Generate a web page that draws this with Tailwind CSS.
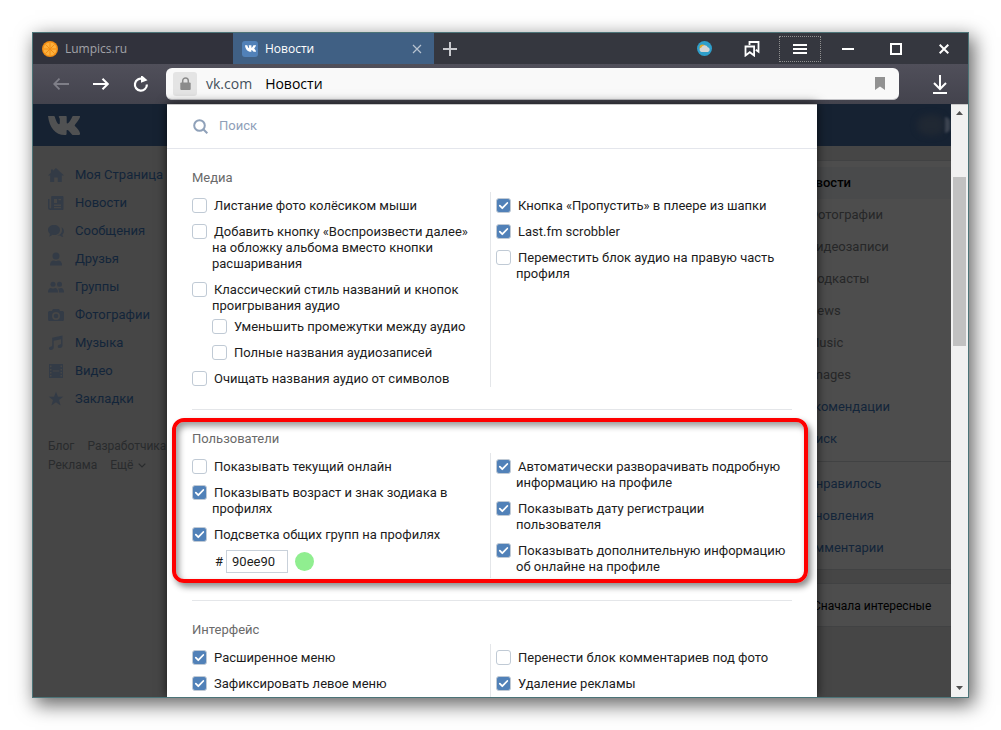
<!DOCTYPE html>
<html lang="ru">
<head>
<meta charset="utf-8">
<title>Новости</title>
<script src="https://cdn.jsdelivr.net/npm/@tailwindcss/browser@4"></script>
</head>
<body class="bg-white font-['Roboto','Liberation_Sans',sans-serif] text-[13px] leading-4 text-[#1c1c1c]">
<svg class="hidden" aria-hidden="true">
  <symbol id="tick" viewBox="0 0 15 15"><path d="M3.8 7.6l2.5 2.6 5-5.2" fill="none" stroke="#fff" stroke-width="1.8" stroke-linecap="round" stroke-linejoin="round"/></symbol>
  <symbol id="vk" viewBox="0 0 32 19"><path d="M0 0h5.600c.8 0 1.100.4 1.300 1.100C8 5.200 9.800 8.300 11 8.300c.6 0 .8-.5.8-1.700V3.400c0-1.300-.7-1.900-1-2.400-.3-.6.2-1 .9-1h5.900c.9 0 1.100.4 1.100 1.200v5.300c0 .7.2 1 .6 1 1.200 0 3.500-3.400 4.800-6.500.3-.7.7-1 1.500-1h5.600c.9 0 1 .4.7 1.300-1 3-5.200 7.500-5.200 8.300 0 .8 4.500 4 5.300 7.700.2.900-.2 1.700-1.200 1.700h-5.500c-1 0-1.400-.5-2-1.300-1.300-1.600-3-3.700-4-3.700-.6 0-.7.4-.7 1.300v2.100c0 1.200-.4 1.600-1.800 1.600C7.200 19 1.300 11.500 0 0z" fill="currentColor"/></symbol>
</svg>
<div class="flex h-screen p-8">
<div class="flex min-w-0 flex-1 flex-col overflow-hidden border border-[#4c7478] bg-[#464646] shadow-[4px_6px_18px_1px_rgba(0,0,0,0.6)]">

  <!-- Tabs and window buttons -->
  <header class="flex h-[31px] shrink-0 items-center bg-[#35373f] font-['Open_Sans','Noto_Sans',sans-serif] text-xs">
    <a href="#" class="flex h-full w-[200px] items-center bg-[#31323c] pl-[9px] text-[#a2a3a8]">
      <svg class="mr-[7px] size-4" viewBox="0 0 16 16"><circle cx="8" cy="8" r="8" fill="#f28c13"/><circle cx="8" cy="8" r="6.600" fill="#fdb03c"/><path d="M8 1.500v13M1.500 8h13M3.400 3.400l9.200 9.200M12.600 3.400l-9.200 9.200" stroke="#f28c13" stroke-width="1"/></svg>
      Lumpics.ru
    </a>
    <div class="flex h-full w-[201px] items-center bg-[#406084] pr-3 pl-[9px] text-white">
      <span class="mr-[7px] flex size-4 items-center justify-center rounded-[3px] bg-[#5181b8]"><svg class="h-[7px] w-[11px] text-white"><use href="#vk"/></svg></span>
      <a href="#" class="flex-1">Новости</a>
      <button aria-label="Закрыть вкладку"><svg class="size-[10px]" viewBox="0 0 10 10"><path d="M1 1l8 8M9 1l-8 8" stroke="#b7c3d0" stroke-width="1.200"/></svg></button>
    </div>
    <button aria-label="Новая вкладка" class="flex h-full w-8 items-center justify-center"><svg class="size-[14px]" viewBox="0 0 14 14"><path d="M7 0v14M0 7h14" stroke="#c9cace" stroke-width="2"/></svg></button>
    <div class="flex-1"></div>
    <button aria-label="Погода" class="flex w-12 justify-center"><svg class="size-[15px]" viewBox="0 0 15 15"><circle cx="7.500" cy="7.500" r="7.500" fill="#2f9fcb"/><circle cx="5.500" cy="6.500" r="3" fill="#e0a92c"/><path d="M4.500 11a2.300 2.300 0 0 1-.2-4.500 3.500 3.500 0 0 1 6.500-.3A2.500 2.500 0 0 1 11 11z" fill="#d5d5d5"/></svg></button>
    <button aria-label="Закладки" class="flex w-12 justify-center"><svg class="size-4" viewBox="0 0 16 16" fill="none" stroke="#fff" stroke-width="1.800"><path d="M1.500 5.500h8.600v9l-4.300-3.300-4.300 3.300z"/><path d="M5.500 4V1h9v9.800l-2.700-2"/></svg></button>
    <button aria-label="Меню" class="mx-[3px] flex h-[26px] w-[42px] items-center justify-center border border-dotted border-[#909090]"><svg class="h-[10px] w-[14px]" viewBox="0 0 14 10"><path d="M0 1h14M0 5h14M0 9h14" stroke="#fff" stroke-width="2"/></svg></button>
    <button aria-label="Свернуть" class="flex w-12 justify-center"><svg class="h-[2px] w-3" viewBox="0 0 12 2"><path d="M0 1h12" stroke="#fff" stroke-width="2"/></svg></button>
    <button aria-label="Развернуть" class="flex w-12 justify-center"><svg class="size-3" viewBox="0 0 12 12"><path d="M1 1h10v10H1z" fill="none" stroke="#fff" stroke-width="2"/></svg></button>
    <button aria-label="Закрыть" class="flex w-12 justify-center"><svg class="size-[10px]" viewBox="0 0 10 10"><path d="M.7.7l8.600 8.600M9.300.7L.7 9.300" stroke="#fff" stroke-width="2"/></svg></button>
  </header>

  <!-- Address bar -->
  <div class="flex h-10 shrink-0 items-center bg-linear-to-b from-[#504f5a] to-[#43434d] pl-2 font-['Open_Sans','Noto_Sans',sans-serif]">
    <button aria-label="Назад" class="flex w-10 justify-center"><svg class="h-3 w-4" viewBox="0 0 16 12" fill="none" stroke="#7f7f88" stroke-width="1.800"><path d="M16 6H1.500M6.500.7L1.200 6l5.300 5.300"/></svg></button>
    <button aria-label="Вперёд" class="flex w-10 justify-center"><svg class="h-3 w-4" viewBox="0 0 16 12" fill="none" stroke="#fff" stroke-width="2"><path d="M0 6h14.500M9.500.7L14.800 6l-5.300 5.300"/></svg></button>
    <button aria-label="Обновить" class="flex w-10 justify-center"><svg class="size-4" viewBox="0 0 16 16"><path d="M13.900 8.500a6 6 0 1 1-4.200-5.600" fill="none" stroke="#fff" stroke-width="2.200"/><path d="M8 0h1.500l5 4.200L8 6.800z" fill="#fff"/></svg></button>
    <div class="ml-[5px] flex h-8 flex-1 items-center rounded-md border-b border-[#c4c4c8] bg-[#f9f9f9] pr-[14px] pl-[7px] text-sm">
      <span class="mr-[9px] flex size-6 items-center justify-center rounded-[3px] bg-[#e4e4e4]"><svg class="h-[13px] w-[11px]" viewBox="0 0 11 13"><path d="M2.700 6V3.700a2.800 2.800 0 0 1 5.600 0V6" fill="none" stroke="#8b8b8b" stroke-width="1.500"/><rect y="5.500" x=".3" width="10.400" height="7.500" rx="1" fill="#8b8b8b"/></svg></span>
      <span class="mr-[13px] text-[#44505c]">vk.com</span>
      <span class="flex-1 text-black">Новости</span>
      <button aria-label="Добавить в закладки"><svg class="h-[13px] w-[10px]" viewBox="0 0 10 13"><path d="M0 0h10v13L5 9.500 0 13z" fill="#929292"/></svg></button>
    </div>
    <button aria-label="Загрузки" class="mr-3 ml-[25px] flex w-8 justify-center"><svg class="h-[19px] w-[14px]" viewBox="0 0 14 19" fill="none" stroke="#fff" stroke-width="2"><path d="M7 0v13.500M1 8l6 6 6-6M0 18h14"/></svg></button>
  </div>

  <div class="flex min-h-0 flex-1">
    <!-- Dimmed left menu -->
    <aside class="min-w-0 flex-1 overflow-hidden">
      <div class="flex h-[42px] items-center bg-[#162232] pl-[15px] text-[#505152]"><svg class="h-[19px] w-8"><use href="#vk"/></svg></div>
      <nav class="mt-[15px] flex flex-col pl-[15px] whitespace-nowrap text-[#13253a] [&_svg]:size-4 [&_svg]:shrink-0 [&_svg]:fill-[#333b46]">
        <a href="#" class="flex h-7 items-center gap-[11px]"><svg viewBox="0 0 16 16"><path d="M8 1l8 7.500h-2.200V15H9.800v-4.500H6.200V15H2.200V8.500H0L3 5.700V2.500h2v1.300z"/></svg>Моя Страница</a>
        <a href="#" class="flex h-7 items-center gap-[11px]"><svg viewBox="0 0 16 16"><path fill-rule="evenodd" d="M4 1h10.500q1 0 1 1v12q0 1-1 1H2.500Q0 15 0 12.500V4h1.500v8.500q0 1 .8 1 .9 0 .9-1V2q0-1 .8-1zM6 4v4h3V4zM6 9.500V11h7V9.500zM6 12v1.300h7V12zM10.500 4v1.300H13V4z"/></svg>Новости</a>
        <a href="#" class="flex h-7 items-center gap-[11px]"><svg viewBox="0 0 16 16"><path d="M6 2c3.500 0 6 2 6 5s-2.500 5-6 5l-1.600-.2Q3 13.500 1 13.500q1-1.500.8-2.800Q0 9.300 0 7c0-3 2.500-5 6-5zM13.500 4.200c3 1.800 3.200 5.400.9 7.300q0 1.500 1 2.500-2 0-3.200-1.500l-2.700.1c4-1 5.500-4.500 4-8.400z"/></svg>Сообщения</a>
        <a href="#" class="flex h-7 items-center gap-[11px]"><svg viewBox="0 0 16 16"><circle cx="8" cy="5" r="3.500"/><path d="M2 14.500q0-5 4-5 2 1 4 0 4 0 4 5z"/></svg>Друзья</a>
        <a href="#" class="flex h-7 items-center gap-[11px]"><svg viewBox="0 0 16 16"><circle cx="5" cy="5.300" r="2.500"/><circle cx="11.500" cy="5.300" r="2.500"/><path d="M0 13.500q0-4.500 3-4.500 2 1 4 0 3 0 3 4.500zM11 13.500q0-3-1-4.300 1.500.5 3-.2 3 0 3 4.500z"/></svg>Группы</a>
        <a href="#" class="flex h-7 items-center gap-[11px]"><svg viewBox="0 0 16 16"><path fill-rule="evenodd" d="M5 2h6l1 2h2.500Q16 4 16 5.500v7q0 1.500-1.500 1.500h-13Q0 14 0 12.500v-7Q0 4 1.500 4H4zM8 5a4 4 0 1 0 0 8 4 4 0 0 0 0-8zm0 1.700a2.300 2.300 0 1 1 0 4.600 2.300 2.300 0 0 1 0-4.600z"/></svg>Фотографии</a>
        <a href="#" class="flex h-7 items-center gap-[11px]"><svg viewBox="0 0 16 16"><path d="M4.200 2.800L14.500.5v10c0 1.300-1 2.500-2.700 2.500-1.300 0-2-.7-2-1.600 0-2 3.300-1.500 3.300-2.800V4.200l-7.400 1.600v6.700c0 1.400-1.200 2.500-2.800 2.500-1.200 0-1.900-.7-1.900-1.500 0-2 3.200-1.500 3.200-2.900z"/></svg>Музыка</a>
        <a href="#" class="flex h-7 items-center gap-[11px]"><svg viewBox="0 0 16 16"><path fill-rule="evenodd" d="M1 1h14v14H1zM2 2.500v1.700h1.500V2.500zM2 6v1.500h1.500V6zM2 9v1.500h1.500V9zM2 12v1.500h1.500V12zM12.500 2.500v1.700H14V2.500zM12.500 6v1.500H14V6zM12.500 9v1.500H14V9zM12.500 12v1.500H14V12zM4.800 7.500v1h6.400v-1z"/></svg>Видео</a>
        <a href="#" class="flex h-7 items-center gap-[11px]"><svg viewBox="0 0 16 16"><path d="M8 .8l2 5h5.200l-4.200 3.300 1.600 5.300L8 11.200l-4.600 3.200L5 9.100.8 5.800H6z"/></svg>Закладки</a>
      </nav>
      <div class="mt-[25px] flex flex-col gap-[3px] pl-[15px] text-xs leading-4 whitespace-nowrap text-[#292b2d]">
        <div class="flex gap-[13px]"><a href="#">Блог</a><a href="#">Разработчикам</a></div>
        <div class="flex gap-[13px]"><a href="#">Реклама</a><a href="#" class="flex items-center gap-[5px]">Ещё <svg class="h-[5px] w-2" viewBox="0 0 8 5"><path d="M.7.7L4 4 7.300.7" fill="none" stroke="#292b2d" stroke-width="1.200"/></svg></a></div>
      </div>
    </aside>

    <!-- Settings panel -->
    <main class="relative z-10 w-[650px] shrink-0 overflow-hidden border-t border-[#c8c8c8] bg-white shadow-[0_0_10px_rgba(0,0,0,0.7)]">
      <div class="flex h-11 items-center border-b border-[#e4e6ec] pb-px pl-[26px]">
        <svg class="mr-[11px] size-[15px]" viewBox="0 0 15 15" fill="none" stroke="#8fa1b9" stroke-width="2"><circle cx="6.500" cy="6.500" r="5.300"/><path d="M10.300 10.300l4 4"/></svg>
        <input type="text" aria-label="Поиск" placeholder="Поиск" class="flex-1 outline-none placeholder:text-[#8fa0b8]">
      </div>
      <div class="px-[25px] [&_input[type=checkbox]]:col-start-1 [&_input[type=checkbox]]:row-start-1 [&_input[type=checkbox]]:size-[15px] [&_input[type=checkbox]]:appearance-none [&_input[type=checkbox]]:rounded-[3px] [&_input[type=checkbox]]:border [&_input[type=checkbox]]:border-[#c0cad5] [&_input:checked]:border-[#5181b8] [&_input:checked]:bg-[#5181b8] [&_label]:flex [&_label]:gap-[5px] [&_label>span:first-child]:grid [&_label>span:first-child]:size-[15px] [&_label>span:first-child]:shrink-0 [&_label>span:last-child]:indent-[2px] [&_svg]:pointer-events-none [&_svg]:z-10 [&_svg]:col-start-1 [&_svg]:row-start-1 [&_svg]:size-[15px] [&_h2]:mb-[6px] [&_h2]:text-[#6a6a6a]">

        <section class="pt-[21px] pb-[22px]">
          <h2>Медиа</h2>
          <div class="flex">
            <div class="flex w-[298px] flex-col gap-[10px] pt-[6px] pr-5">
              <label><span><input type="checkbox"></span><span>Листание фото колёсиком мыши</span></label>
              <label><span><input type="checkbox"></span><span>Добавить кнопку «Воспроизвести далее» на обложку альбома вместо кнопки расшаривания</span></label>
              <div class="flex flex-col gap-[5px]">
                <label><span><input type="checkbox"></span><span>Классический стиль названий и кнопок проигрывания аудио</span></label>
                <div class="flex flex-col gap-[10px] pl-5">
                  <label><span><input type="checkbox"></span><span>Уменьшить промежутки между аудио</span></label>
                  <label><span><input type="checkbox"></span><span>Полные названия аудиозаписей</span></label>
                </div>
              </div>
              <label><span><input type="checkbox"></span><span>Очищать названия аудио от символов</span></label>
            </div>
            <div class="flex flex-1 flex-col gap-[10px] border-l border-[#e4e6e9] pt-[6px] pl-[5px]">
              <label><span><input type="checkbox" checked><svg><use href="#tick"/></svg></span><span>Кнопка «Пропустить» в плеере из шапки</span></label>
              <label><span><input type="checkbox" checked><svg><use href="#tick"/></svg></span><span>Last.fm scrobbler</span></label>
              <label><span><input type="checkbox"></span><span>Переместить блок аудио на правую часть профиля</span></label>
            </div>
          </div>
        </section>

        <section class="relative border-t border-[#e4e6e9] pt-[21px] pb-[22px]">
          <h2>Пользователи</h2>
          <div class="flex">
            <div class="flex w-[298px] flex-col gap-[10px] pt-[6px] pr-5 pb-[5px]">
              <label><span><input type="checkbox"></span><span>Показывать текущий онлайн</span></label>
              <label><span><input type="checkbox" checked><svg><use href="#tick"/></svg></span><span>Показывать возраст и знак зодиака в профилях</span></label>
              <div class="flex flex-col gap-[7px]">
                <label><span><input type="checkbox" checked><svg><use href="#tick"/></svg></span><span>Подсветка общих групп на профилях</span></label>
                <div class="flex items-center pl-[23px]">#<input type="text" aria-label="Цвет подсветки" value="90ee90" class="ml-[3px] h-[23px] w-[62px] border border-[#c9d1da] px-[5px] outline-none"><span class="ml-[7px] size-[19px] rounded-full bg-[#90ee90]"></span></div>
              </div>
            </div>
            <div class="flex flex-1 flex-col gap-[10px] border-l border-[#e4e6e9] pt-[6px] pl-[5px]">
              <label><span><input type="checkbox" checked><svg><use href="#tick"/></svg></span><span>Автоматически разворачивать подробную информацию на профиле</span></label>
              <label><span><input type="checkbox" checked><svg><use href="#tick"/></svg></span><span>Показывать дату регистрации<br>пользователя</span></label>
              <label><span><input type="checkbox" checked><svg><use href="#tick"/></svg></span><span>Показывать дополнительную информацию об онлайне на профиле</span></label>
            </div>
          </div>
          <div class="pointer-events-none absolute top-2 -right-4 bottom-[17px] -left-5 rounded-xl border-4 border-[#fe0000] shadow-[3px_4px_6px_rgba(0,0,0,0.45),inset_3px_4px_6px_rgba(0,0,0,0.4)]"></div>
        </section>

        <section class="border-t border-[#e4e6e9] pt-[21px]">
          <h2>Интерфейс</h2>
          <div class="flex">
            <div class="flex w-[298px] flex-col gap-[10px] pt-[6px] pb-[10px]">
              <label><span><input type="checkbox" checked><svg><use href="#tick"/></svg></span><span>Расширенное меню</span></label>
              <label><span><input type="checkbox" checked><svg><use href="#tick"/></svg></span><span>Зафиксировать левое меню</span></label>
            </div>
            <div class="flex flex-1 flex-col gap-[10px] border-l border-[#e4e6e9] pt-[6px] pl-[5px]">
              <label><span><input type="checkbox"></span><span>Перенести блок комментариев под фото</span></label>
              <label><span><input type="checkbox" checked><svg><use href="#tick"/></svg></span><span>Удаление рекламы</span></label>
            </div>
          </div>
        </section>
      </div>
    </main>

    <!-- Dimmed right filters -->
    <aside class="min-w-0 flex-1 overflow-hidden whitespace-nowrap">
      <div class="flex h-[42px] items-center justify-end bg-[#162232]"><span class="h-5 w-7 rounded-full bg-[#202833] blur-[3px]"></span><span class="mr-px h-4 w-[5px] rounded-r-full bg-[#3b4350] blur-[1px]"></span></div>
      <nav class="mt-[14px] border-y border-[#414243] bg-[#4d4d4d] pt-[6px] [&_a]:-ml-[18px] [&_a]:block [&_a]:py-2">
        <div class="text-[#262728]">
          <a href="#" class="bg-[#494a4b] font-medium text-black">Новости</a>
          <a href="#" class="pl-[9px]">Фотографии</a>
          <a href="#" class="pl-[9px]">Видеозаписи</a>
          <a href="#" class="pl-[9px]">Подкасты</a>
          <a href="#" class="pl-[9px]">News</a>
          <a href="#" class="pl-[9px]">Music</a>
          <a href="#" class="pl-[9px]">Images</a>
        </div>
        <div class="text-[#13253a]"><a href="#">Рекомендации</a><a href="#">Поиск</a></div>
        <div class="mt-[6px] border-t border-[#414243] pt-[6px] pb-[5px] text-[#13253a]"><a href="#">Понравилось</a><a href="#">Обновления</a><a href="#">Комментарии</a></div>
      </nav>
      <div class="mt-[13px] border-y border-[#414243] bg-[#4d4d4d] pt-[14px] pb-[12px]"><a href="#" class="-ml-1 block text-xs leading-4 text-black">Сначала интересные</a></div>
    </aside>

    <!-- Scrollbar -->
    <div class="flex w-[17px] shrink-0 flex-col items-center border-t border-[#c8c8c8] bg-[#f1f1f1]">
      <svg class="mt-[6px] h-1 w-[7px]" viewBox="0 0 7 4"><path d="M0 4h7L3.500 0z" fill="#505050"/></svg>
      <div class="mt-[62px] h-[169px] w-[13px] bg-[#c1c1c1]"></div>
      <div class="flex-1"></div>
      <svg class="mb-[7px] h-1 w-[7px]" viewBox="0 0 7 4"><path d="M0 0h7L3.500 4z" fill="#505050"/></svg>
    </div>
  </div>
</div>
</div>
</body>
</html>
